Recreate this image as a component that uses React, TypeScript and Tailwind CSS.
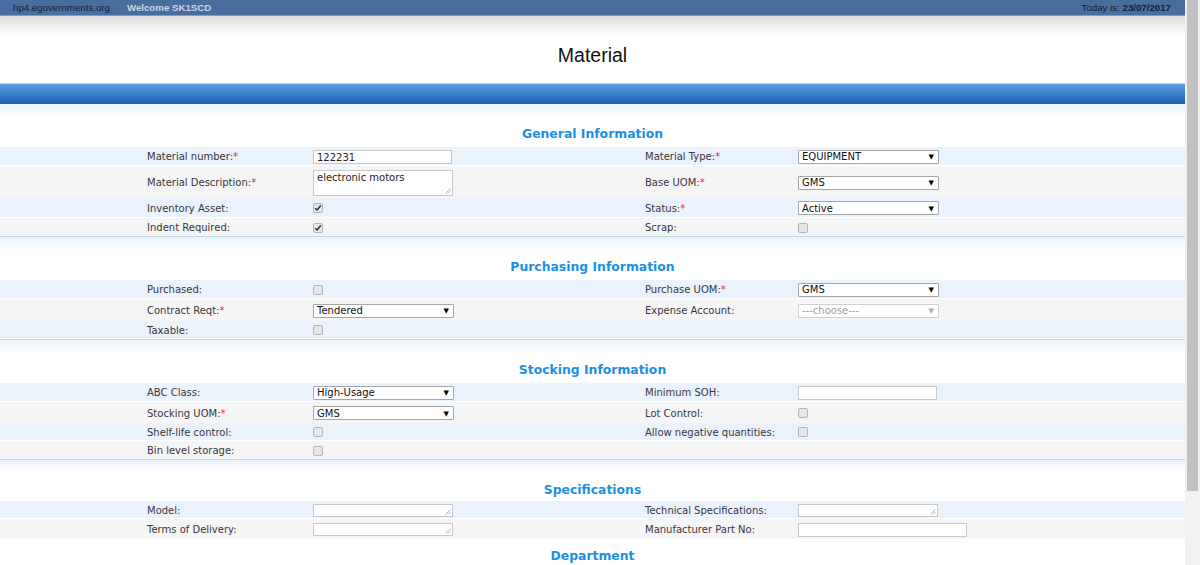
import React from 'react';

type Field =
  | { kind: 'input'; value?: string; w?: number }
  | { kind: 'textarea'; value?: string; h?: number; w?: number }
  | { kind: 'select'; value: string; disabled?: boolean }
  | { kind: 'check'; checked?: boolean }
  | { kind: 'none' };

interface Cell {
  label?: string;
  req?: boolean;
  field: Field;
}

interface Row {
  h: number;
  left: Cell;
  right: Cell;
}

const empty: Cell = { field: { kind: 'none' } };

const sections: { title: string; head: number; rows: Row[] }[] = [
  {
    title: 'General Information',
    head: 43,
    rows: [
      {
        h: 19,
        left: { label: 'Material number:', req: true, field: { kind: 'input', value: '122231' } },
        right: { label: 'Material Type:', req: true, field: { kind: 'select', value: 'EQUIPMENT' } },
      },
      {
        h: 32,
        left: { label: 'Material Description:', req: true, field: { kind: 'textarea', value: 'electronic motors', h: 26 } },
        right: { label: 'Base UOM:', req: true, field: { kind: 'select', value: 'GMS' } },
      },
      {
        h: 20,
        left: { label: 'Inventory Asset:', field: { kind: 'check', checked: true } },
        right: { label: 'Status:', req: true, field: { kind: 'select', value: 'Active' } },
      },
      {
        h: 18,
        left: { label: 'Indent Required:', field: { kind: 'check', checked: true } },
        right: { label: 'Scrap:', field: { kind: 'check' } },
      },
    ],
  },
  {
    title: 'Purchasing Information',
    head: 44,
    rows: [
      {
        h: 19,
        left: { label: 'Purchased:', field: { kind: 'check' } },
        right: { label: 'Purchase UOM:', req: true, field: { kind: 'select', value: 'GMS' } },
      },
      {
        h: 22,
        left: { label: 'Contract Reqt:', req: true, field: { kind: 'select', value: 'Tendered' } },
        right: { label: 'Expense Account:', field: { kind: 'select', value: '---choose---', disabled: true } },
      },
      {
        h: 18,
        left: { label: 'Taxable:', field: { kind: 'check' } },
        right: empty,
      },
    ],
  },
  {
    title: 'Stocking Information',
    head: 44,
    rows: [
      {
        h: 19,
        left: { label: 'ABC Class:', field: { kind: 'select', value: 'High-Usage' } },
        right: { label: 'Minimum SOH:', field: { kind: 'input' } },
      },
      {
        h: 21,
        left: { label: 'Stocking UOM:', req: true, field: { kind: 'select', value: 'GMS' } },
        right: { label: 'Lot Control:', field: { kind: 'check' } },
      },
      {
        h: 18,
        left: { label: 'Shelf-life control:', field: { kind: 'check' } },
        right: { label: 'Allow negative quantities:', field: { kind: 'check' } },
      },
      {
        h: 18,
        left: { label: 'Bin level storage:', field: { kind: 'check' } },
        right: empty,
      },
    ],
  },
  {
    title: 'Specifications',
    head: 42,
    rows: [
      {
        h: 18,
        left: { label: 'Model:', field: { kind: 'textarea', h: 13 } },
        right: { label: 'Technical Specifications:', field: { kind: 'textarea', h: 13 } },
      },
      {
        h: 20,
        left: { label: 'Terms of Delivery:', field: { kind: 'textarea', h: 13 } },
        right: { label: 'Manufacturer Part No:', field: { kind: 'input', w: 169 } },
      },
    ],
  },
];

const Grip = () => (
  <svg className="absolute right-[1px] bottom-[1px]" width="6" height="6" viewBox="0 0 6 6">
    <path d="M5.5 0.5 L0.5 5.5 M5.5 3 L3 5.5" stroke="#9a9a9a" strokeWidth="0.8" />
  </svg>
);

const FieldView = ({ field }: { field: Field }) => {
  switch (field.kind) {
    case 'input':
      return (
        <div
          className="mt-[1px] h-[14px] border border-[#c8c8c8] bg-white pl-[3px] pt-[1px] text-[10px] leading-[12px] text-[#222]"
          style={{ width: field.w ?? 139 }}
        >
          {field.value}
        </div>
      );
    case 'textarea':
      return (
        <div
          className="relative mt-[1px] border border-[#c8c8c8] bg-white pl-[3px] text-[10px] leading-[13px] text-[#222]"
          style={{ width: field.w ?? 140, height: field.h ?? 14 }}
        >
          {field.value}
          <Grip />
        </div>
      );
    case 'select':
      return (
        <div
          className={`mt-[1px] flex h-[14px] w-[141px] items-center justify-between rounded-[1px] border bg-white pl-[3px] pr-[4px] pt-[1px] text-[10px] leading-[12px] ${
            field.disabled ? 'border-[#cfcfcf] text-[#a0a0a0]' : 'border-[#a6a6a6] text-[#111]'
          }`}
        >
          <span>{field.value}</span>
          <span className={`text-[7px] ${field.disabled ? 'text-[#a8a8a8]' : 'text-black'}`}>▼</span>
        </div>
      );
    case 'check':
      return (
        <div className="mt-[1px] flex h-[10px] w-[10px] items-center justify-center rounded-[2px] border border-[#b5b5b5] bg-[#e6e6e6]">
          {field.checked && (
            <svg width="8" height="8" viewBox="0 0 8 8">
              <path d="M1.2 4.2 L3.1 6 L6.8 1.6" fill="none" stroke="#333" strokeWidth="1.5" />
            </svg>
          )}
        </div>
      );
    default:
      return null;
  }
};

const Label = ({ cell }: { cell: Cell }) =>
  cell.label ? (
    <span className="pt-[2px]">
      {cell.label}
      {cell.req && <span className="text-[#e0303a]">*</span>}
    </span>
  ) : null;

export default function App() {
  return (
    <div className="flex h-[565px] w-[1200px] overflow-hidden bg-white font-['DejaVu_Sans',Verdana,sans-serif]">
      <div className="w-[1185px] shrink-0">
        {/* top strip */}
        <div className="flex h-[16px] items-center border-b border-[#7f9dc6] bg-[#4a6da0] pl-[13px] pr-[14px] font-['Liberation_Sans',Arial,sans-serif] text-[9.7px] leading-none">
          <span className="text-[#15203a]">hp4.egovernments.org</span>
          <span className="ml-[17px] font-bold text-[#c9d4e6]">Welcome SK1SCD</span>
          <span className="ml-auto text-[#15203a]">
            Today is: <b>23/07/2017</b>
          </span>
        </div>
        <div className="h-[20px] bg-gradient-to-b from-[#dcdcdc] to-white" />
        <div className="flex h-[47px] items-start justify-center pt-[8px] font-['Liberation_Sans',Arial,sans-serif] text-[19.5px] leading-[22px] text-[#111]">
          Material
        </div>
        <div className="h-[21px] border-t border-[#b7d2ee] bg-gradient-to-b from-[#5c9de2] to-[#1a5fb2]" />

        {sections.map((s, si) => (
          <div key={s.title}>
            <div
              className={`bg-gradient-to-b from-[#eaf3fc] via-white via-[30%] to-white ${
                si > 0 ? 'border-t border-[#c4d8ea]' : ''
              }`}
              style={{ height: s.head }}
            >
              <div className="pt-[22px] text-center text-[12.4px] font-bold leading-[16px] text-[#1d8fe3]">{s.title}</div>
            </div>
            {s.rows.map((r, ri) => (
              <div
                key={ri}
                className={`grid grid-cols-[147px_166px_332px_153px_1fr] items-center text-[10px] leading-[12px] text-[#3a3640] ${
                  ri % 2 === 0 ? 'bg-[#eaf2fb] border-b border-white' : 'bg-[#f5f5f5]'
                }`}
                style={{ height: r.h }}
              >
                <div />
                <Label cell={r.left} />
                <FieldView field={r.left.field} />
                <Label cell={r.right} />
                <FieldView field={r.right.field} />
              </div>
            ))}
          </div>
        ))}
        <div className="pt-[9px] text-center text-[12.4px] font-bold leading-[16px] text-[#1d8fe3]">Department</div>
      </div>
      {/* scrollbar */}
      <div className="w-[15px] shrink-0 bg-[#f1f1f1] pl-[2px] pr-[2px]">
        <div className="h-[491px] bg-[#c1c1c1]" />
      </div>
    </div>
  );
}
